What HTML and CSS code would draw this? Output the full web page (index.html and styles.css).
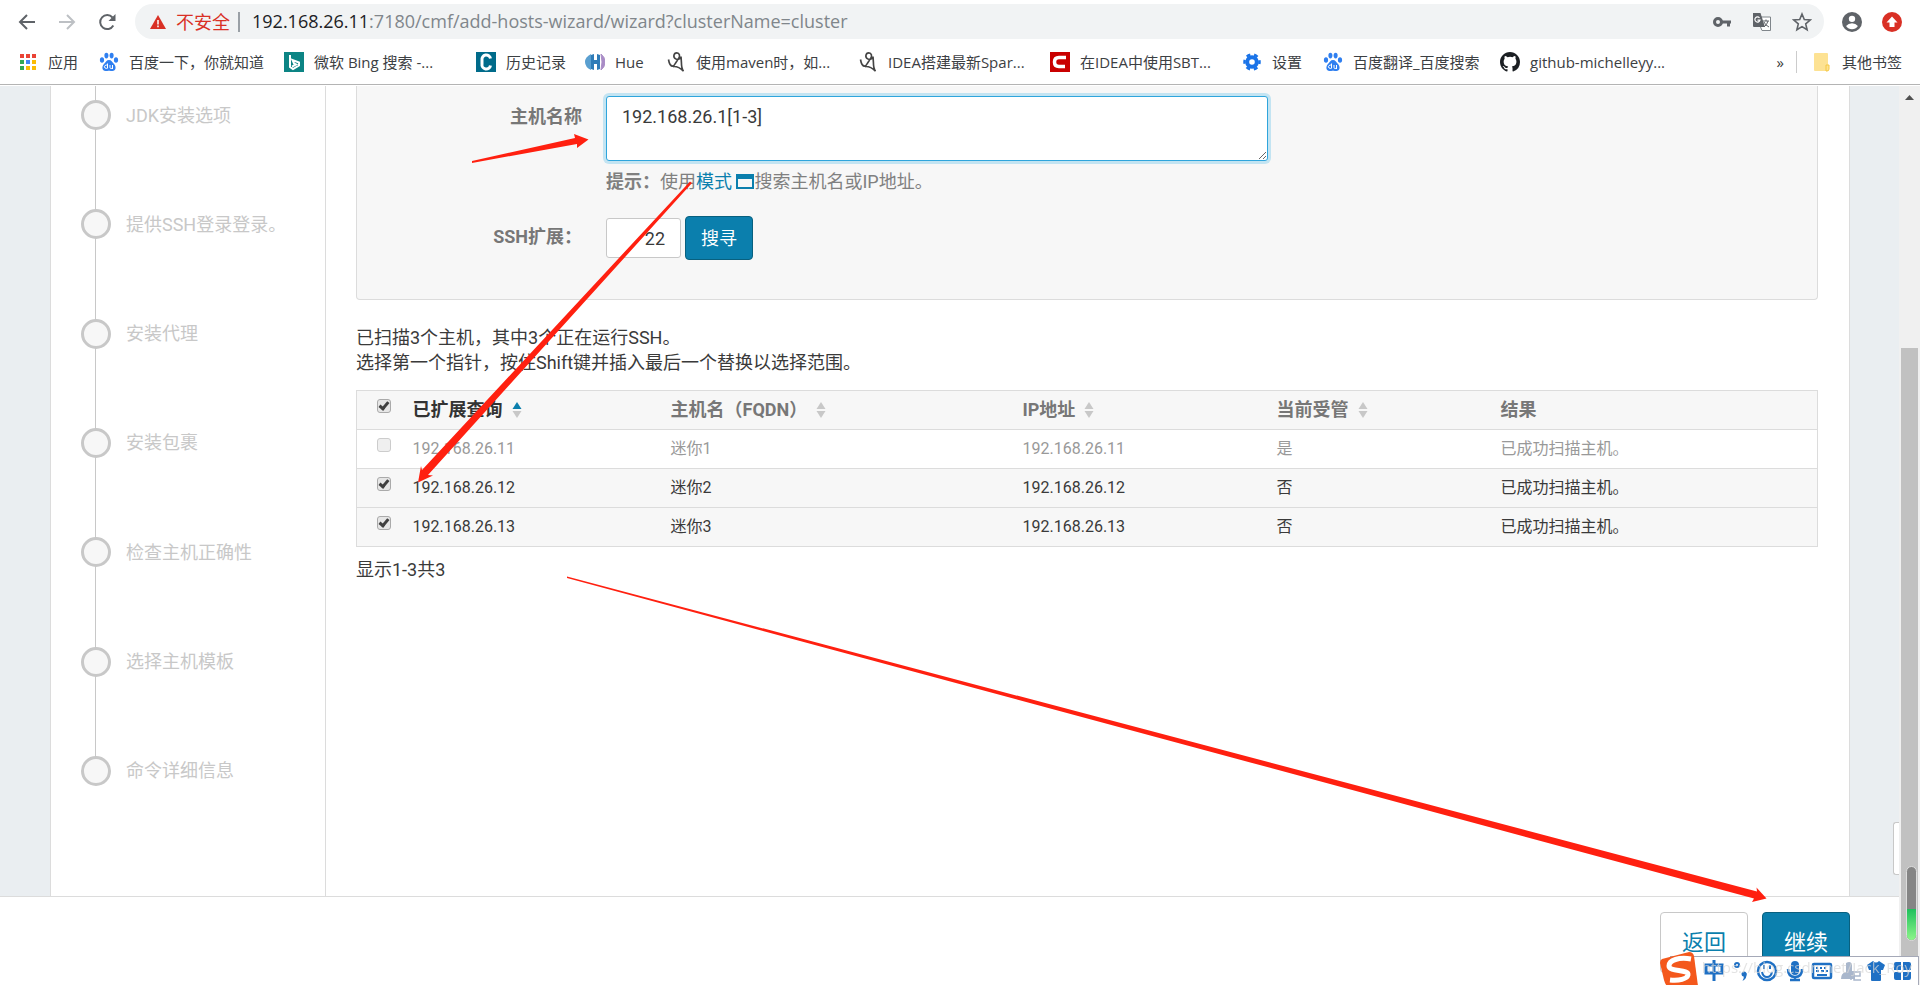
FILE: index.html
```html
<!DOCTYPE html>
<html lang="zh-CN">
<head>
<meta charset="utf-8">
<title>添加主机</title>
<link rel="stylesheet" href="styles.css">
</head>
<body>
<svg class="defs" aria-hidden="true">
  <symbol id="paw" viewBox="0 0 20 20">
    <g fill="#2f7ff0"><ellipse cx="3" cy="8" rx="2.1" ry="2.8"/><ellipse cx="7.4" cy="3.6" rx="2" ry="2.8"/><ellipse cx="12.6" cy="3.6" rx="2" ry="2.8"/><ellipse cx="17" cy="8" rx="2.1" ry="2.8"/><path d="M10 8c2.500 0 3 2 5 4 2.600 2.600 2 7-1.600 7-1.600 0-2-.3-3.400-.3s-1.800.3-3.400.3C3 19 2.400 14.600 5 12c2-2 2.500-4 5-4z"/></g>
    <path d="M8.500 11.500v5M8.500 14a1.600 1.600 0 1 0 0 1.500M11 13v2.500q0 1 1.200 1t1.300-1V13v4" fill="none" stroke="#fff"/>
  </symbol>
  <symbol id="quill" viewBox="0 0 20 24">
    <path d="M1 9c1 6 3 8 5 8 2.500 0 3-4 7-9 2.500-3 1-7-2-7-4 0-5 6-1 7.500 3 1 6-1 6-3l.5 7c0 5 .5 8 2.500 10.500-3-3-7-6-12.500-5.500" fill="none" stroke="#444" stroke-width="2"/>
  </symbol>
  <symbol id="sort" viewBox="0 0 10 16"><path class="sort-up" d="M5 0l4.500 7h-9z"/><path class="sort-down" d="M.5 9h9L5 16z"/></symbol>
</svg>

<header class="browser">
  <div class="toolbar">
    <nav class="nav" aria-label="浏览">
      <button class="icon-btn" aria-label="后退"><svg width="20" height="20" viewBox="0 0 20 20"><path d="M18 10H3M10 3l-7 7 7 7" fill="none" stroke="#5f6368" stroke-width="2"/></svg></button>
      <button class="icon-btn" aria-label="前进"><svg width="20" height="20" viewBox="0 0 20 20"><path d="M2 10h15M10 3l7 7-7 7" fill="none" stroke="#bdc0c4" stroke-width="2"/></svg></button>
      <button class="icon-btn" aria-label="刷新"><svg width="20" height="20" viewBox="0 0 20 20"><path d="M16.300 13.500A7 7 0 1 1 15.500 5.500" fill="none" stroke="#5f6368" stroke-width="2"/><path d="M18.500 2v7h-7z" fill="#5f6368"/></svg></button>
    </nav>
    <div class="address">
      <svg width="16" height="16" viewBox="0 0 16 16"><path d="M8 1l8 14H0z" fill="#d93025"/><path d="M8 6v4.500M8 11.500v1.800" stroke="#fff" stroke-width="1.500"/></svg>
      <span class="insecure">不安全</span>
      <span class="url">192.168.26.11<span class="url-rest">:7180/cmf/add-hosts-wizard/wizard?clusterName=cluster</span></span>
      <button class="icon-btn" aria-label="密码"><svg width="20" height="20" viewBox="0 0 20 20"><path d="M9 8.500h10v3h-1v3h-3v-3H9" fill="#5f6368"/><circle cx="6" cy="10" r="3.500" fill="#f1f3f4" stroke="#5f6368" stroke-width="3"/></svg></button>
      <button class="icon-btn" aria-label="翻译"><svg width="20" height="20" viewBox="0 0 20 20"><path d="M8 5h10.500v13.500H10L8.500 15" fill="#fff" stroke="#80868b"/><path d="M1 1h7.500L13 15H2q-1 0-1-1z" fill="#5f6368"/><path d="M7.500 5.800A2.600 2.600 0 1 0 8 8.200H5.500" fill="none" stroke="#fff" stroke-width="1.200"/><path d="M11 9h6M14 7.500V9M16 9q-1 4-4 6M12 10q1 3 5 5" fill="none" stroke="#5f6368"/></svg></button>
      <button class="icon-btn" aria-label="收藏"><svg width="20" height="20" viewBox="0 0 20 20"><path d="M10 2l2.300 5.500 5.900.5-4.500 3.900 1.400 5.800L10 14.600l-5.100 3.100 1.400-5.800L1.800 8l5.900-.5z" fill="none" stroke="#5f6368" stroke-width="1.600"/></svg></button>
    </div>
    <button class="icon-btn" aria-label="用户"><svg width="20" height="20" viewBox="0 0 22 22"><circle cx="11" cy="11" r="11" fill="#5f6368"/><circle cx="11" cy="7.500" r="3.500" fill="#fff"/><path d="M4.500 15.500q2.500-3 6.500-3t6.500 3q-2.500 3.500-6.500 3.500t-6.500-3.500z" fill="#fff"/></svg></button>
    <button class="icon-btn" aria-label="更新"><svg width="20" height="20" viewBox="0 0 20 20"><circle cx="10" cy="10" r="10" fill="#d93025"/><path d="M10 4.500l5.500 6h-3V15h-5v-4.500h-3z" fill="#fff"/></svg></button>
  </div>
  <nav class="bookmarks" aria-label="书签">
    <a class="bm bm-short" href="#"><svg width="20" height="20" viewBox="0 0 20 20"><path d="M2 2h4v4H2z" fill="#ea4335"/><path d="M8 2h4v4H8z" fill="#ea4335"/><path d="M14 2h4v4h-4z" fill="#ea4335"/><path d="M2 8h4v4H2zM2 14h4v4H2z" fill="#34a853"/><path d="M8 8h4v4H8z" fill="#4285f4"/><path d="M14 8h4v4h-4zM8 14h4v4H8zM14 14h4v4h-4z" fill="#fbbc04"/></svg><span>应用</span></a>
    <a class="bm bm-long" href="#"><svg width="20" height="20"><use href="#paw"/></svg><span>百度一下，你就知道</span></a>
    <a class="bm bm-full" href="#"><svg width="20" height="20" viewBox="0 0 20 20"><path d="M0 0h20v20H0z" fill="#0c8484"/><path d="M6 3v12l3 2 6-3.500v-3L8.500 8l1.500 3.500 2 1-4 2.200" fill="none" stroke="#fff" stroke-width="2"/></svg><span>微软 Bing 搜索 -...</span></a>
    <a class="bm bm-medium" href="#"><svg width="20" height="20" viewBox="0 0 20 20"><path d="M0 0h20v20H0z" fill="#006b8a"/><path d="M14.500 6.500A4 4 0 0 0 6 8v4a4 4 0 0 0 8.500 1.500" fill="none" stroke="#fff" stroke-width="3"/></svg><span>历史记录</span></a>
    <a class="bm bm-short" href="#"><svg width="20" height="20" viewBox="0 0 20 20"><path d="M6 2q-6 3-6 8t6 8z" fill="#5a9fd0"/><path d="M6 3l3-1v6h3V2l3 1v14l-3 1v-6H9v6l-3-1z" fill="#2f7cb8"/><path d="M16 2q4 3 4 8t-4 8q2-8 0-16z" fill="#a98cc6" stroke="#a98cc6"/></svg><span>Hue</span></a>
    <a class="bm bm-full" href="#"><svg width="20" height="20"><use href="#quill"/></svg><span>使用maven时，如...</span></a>
    <a class="bm bm-full" href="#"><svg width="20" height="20"><use href="#quill"/></svg><span>IDEA搭建最新Spar...</span></a>
    <a class="bm bm-full" href="#"><svg width="20" height="20" viewBox="0 0 20 20"><path d="M0 0h20v20H0z" fill="#c90000"/><path d="M16 5.500H9Q4.500 5.500 4.500 10T9 14.500h6" fill="none" stroke="#fff" stroke-width="3.500"/></svg><span>在IDEA中使用SBT...</span></a>
    <a class="bm bm-short" href="#"><svg width="20" height="20" viewBox="0 0 20 20"><circle cx="10" cy="10" r="4.800" fill="none" stroke="#1a73e8" stroke-width="4"/><circle cx="10" cy="10" r="7.500" fill="none" stroke="#1a73e8" stroke-width="2.500" stroke-dasharray="4 3.850" stroke-dashoffset="2"/></svg><span>设置</span></a>
    <a class="bm bm-search" href="#"><svg width="20" height="20"><use href="#paw"/></svg><span>百度翻译_百度搜索</span></a>
    <a class="bm bm-full" href="#"><svg width="20" height="20" viewBox="0 0 16 16"><path fill="#1b1f23" d="M8 0C3.580 0 0 3.580 0 8c0 3.540 2.290 6.530 5.470 7.590.4.070.55-.17.55-.38v-1.490c-2.010.37-2.530-.49-2.690-.94-.09-.23-.48-.94-.82-1.130-.28-.15-.68-.52-.01-.53.63-.01 1.080.58 1.230.82.72 1.210 1.870.87 2.330.66.07-.52.28-.87.51-1.070-1.780-.2-3.640-.89-3.640-3.950 0-.87.31-1.590.82-2.150-.08-.2-.36-1.020.08-2.120 0 0 .67-.21 2.200.82a7.600 7.600 0 0 1 4 0c1.530-1.040 2.200-.82 2.200-.82.44 1.100.16 1.920.08 2.120.51.56.82 1.270.82 2.150 0 3.070-1.870 3.750-3.650 3.950.29.25.54.73.54 1.480v2.200c0 .21.150.46.55.38A8 8 0 0 0 16 8c0-4.420-3.580-8-8-8z"/></svg><span>github-michelleyy...</span></a>
    <button class="more" aria-label="更多书签">»</button>
    <a class="other" href="#"><svg width="20" height="20" viewBox="0 0 20 20"><path d="M3 1h12q1 0 1 1v17H3q-1 0-1-1V2q0-1 1-1z" fill="#fde293"/><path d="M14 13h3v4q0 2-2 2h-1z" fill="#fde293" stroke="#f5c842"/></svg><span>其他书签</span></a>
  </nav>
</header>

<div class="viewport">
  <div class="page">
    <div class="wizard">
      <aside class="sidebar">
        <ol class="steps">
          <li class="step">JDK安装选项</li>
          <li class="step">提供SSH登录登录。</li>
          <li class="step">安装代理</li>
          <li class="step">安装包裹</li>
          <li class="step">检查主机正确性</li>
          <li class="step">选择主机模板</li>
          <li class="step">命令详细信息</li>
        </ol>
      </aside>
      <main class="content">
        <form class="search">
          <label class="field-label" for="hosts">主机名称</label>
          <div class="field">
            <textarea class="hosts" id="hosts" autofocus>192.168.26.1[1-3]</textarea>
            <p class="hint"><strong>提示：</strong>使用<a href="#">模式 <svg width="18" height="15" viewBox="0 0 18 15"><path d="M1 1h16v13H1zM1 3h16" fill="none" stroke="#0b7fad" stroke-width="2"/><path d="M0 0h18v5H0z" fill="#0b7fad"/></svg></a>搜索主机名或IP地址。</p>
          </div>
          <label class="field-label" for="port">SSH扩展：</label>
          <div class="port-row">
            <input class="port" id="port" type="text" value="22">
            <button class="btn btn-primary" type="button">搜寻</button>
          </div>
        </form>
        <p class="summary">已扫描3个主机，其中3个正在运行SSH。<br>选择第一个指针，按住Shift键并插入最后一个替换以选择范围。</p>
        <table class="results">
          <colgroup><col class="c-check"><col class="c-query"><col class="c-name"><col class="c-ip"><col class="c-managed"><col></colgroup>
          <thead>
            <tr>
              <th><input type="checkbox" aria-label="全选" checked></th>
              <th class="sorted">已扩展查询<svg class="sort"><use href="#sort"/></svg></th>
              <th>主机名（FQDN）<svg class="sort"><use href="#sort"/></svg></th>
              <th>IP地址<svg class="sort"><use href="#sort"/></svg></th>
              <th>当前受管<svg class="sort"><use href="#sort"/></svg></th>
              <th>结果</th>
            </tr>
          </thead>
          <tbody>
            <tr class="managed"><td><input type="checkbox" aria-label="192.168.26.11" disabled></td><td>192.168.26.11</td><td>迷你1</td><td>192.168.26.11</td><td>是</td><td>已成功扫描主机。</td></tr>
            <tr><td><input type="checkbox" aria-label="192.168.26.12" checked></td><td>192.168.26.12</td><td>迷你2</td><td>192.168.26.12</td><td>否</td><td>已成功扫描主机。</td></tr>
            <tr><td><input type="checkbox" aria-label="192.168.26.13" checked></td><td>192.168.26.13</td><td>迷你3</td><td>192.168.26.13</td><td>否</td><td>已成功扫描主机。</td></tr>
          </tbody>
        </table>
        <p class="count">显示1-3共3</p>
      </main>
    </div>
    <footer class="actions">
      <button class="btn btn-large">返回</button>
      <button class="btn btn-large btn-primary">继续</button>
    </footer>
    <div class="side-tab"></div>
  </div>
  <div class="scrollbar">
    <svg width="21" height="17" viewBox="0 0 21 17"><path d="M6 14l4.500-5 4.500 5z" fill="#505050"/></svg>
    <div class="thumb"></div>
  </div>
</div>

<svg class="arrows" viewBox="0 0 1920 985" aria-hidden="true">
  <g fill="#ff2010">
    <path d="M472 161L575 138l-1-4 14.500 5.500L577 148v-4L472 163z"/>
    <path d="M690 181.500L422 470l-1-4-3 16.500 15-7-5-.5L692 183z"/>
    <path d="M567 576.500L1757 891.500l-.5-4 10 11-14.500 3.500 2-3.500L567 578z"/>
  </g>
</svg>

<div class="meter"><div class="meter-fill"></div></div>

<div class="ime">
  <svg width="260" height="36" viewBox="-4 -2 260 36">
    <path d="M0 8l27-7q4 0 5 4l4 30H5q-2-2-3-6L-2 12q0-3 2-4z" fill="#f4581c"/>
    <path d="M29 8C17 6 7 9 7 15c0 6 20 3 19 9-1 4-9 6-18 5" fill="none" stroke="#fff" stroke-width="5"/>
    <g fill="none" stroke="#1f70c4" stroke-width="3">
      <path d="M44 14h16v8H44zM52 9v21"/>
      <circle cx="75" cy="14" r="2" stroke-width="2"/>
      <circle cx="105" cy="20" r="9" stroke-width="2.500"/><path d="M100 21q1 5 5 5t5-5" stroke-width="2"/><path d="M102 14v4M108 14v4" stroke-width="2"/>
      <path d="M126 18q0 8 7 8t7-8M133 26v4M128 29h10" stroke-width="2.500"/>
      <rect x="151" y="13" width="18" height="14" rx="1" stroke-width="2.500"/><path d="M154 17h2M158 17h2M162 17h2M154 20h3M159 20h3M164 20h2M155 24h10" stroke-width="2"/>
    </g>
    <g fill="#1f70c4"><circle cx="82" cy="23" r="2.500"/><path d="M84.500 22q1 5-4 8 2-3 1-6z"/><rect x="129" y="10" width="8" height="14" rx="4"/>
    <path d="M205 14l6-4q3 3 6 0l6 4-2 5h-2v10q0 1-1 1h-8q-1 0-1-1V19h-2z"/>
    <path d="M234 11h5v8h-7v-6q0-2 2-2zM241 11h6q2 0 2 2v6h-8zM232 21h7v8h-5q-2 0-2-2zM241 21h8v6q0 2-2 2h-6z"/></g>
    <path d="M179 28q0-6 5-7v-9q5-3 6 2v6h3v8z" fill="#a9b7cc"/><path d="M186 21h3v8M191 21h7v4h-6v4h7" fill="none" stroke="#a9b7cc" stroke-width="1.500"/>
  </svg>
</div>
<div class="watermark">https://blog.csdn.net/Jack_Roy</div>
</body>
</html>
```
FILE: styles.css
```css
*, *::before { box-sizing: border-box; }

body {
  position: relative;
  margin: 0;
  height: 100vh;
  display: flex;
  flex-direction: column;
  overflow: hidden;
  background: #fff;
  color: #3a3a3a;
  font: 18px/25px Roboto, "Noto Sans CJK SC", sans-serif;
}

button, input, textarea { font: inherit; color: inherit; }
p { margin: 0; }
a { color: #0b7fad; text-decoration: none; }
.defs { position: absolute; width: 0; height: 0; }

/* Browser frame */
.browser {
  flex: none;
  border-bottom: 1px solid #b4b4b4;
  font-family: "Open Sans", "Noto Sans CJK SC", sans-serif;
}
.toolbar { display: flex; align-items: center; gap: 20px; padding: 4px 18px 4px 17px; height: 43px; }
.nav { display: flex; gap: 20px; }
.icon-btn { display: flex; padding: 0; border: 0; background: none; }
.address {
  flex: 1;
  display: flex;
  align-items: center;
  gap: 20px;
  height: 35px;
  margin: 0 -2px;
  padding: 0 12px 0 15px;
  border-radius: 18px;
  background: #f1f3f4;
}
.insecure {
  margin-left: -10px;
  padding-right: 8px;
  border-right: 2px solid #9aa0a6;
  line-height: 20px;
  color: #d93025;
}
.url { flex: 1; margin-left: -8px; color: #202124; white-space: nowrap; }
.url-rest { color: #80868b; }

.bookmarks {
  display: flex;
  align-items: center;
  height: 41px;
  padding: 0 18px 3px 18px;
  font-size: 15px;
  white-space: nowrap;
}
.bm, .other { display: flex; align-items: center; gap: 10px; color: #3c4043; }
.bm { flex: none; }
.bm svg, .other svg { flex: none; }
.bm-short { width: 81px; }
.bm-medium { width: 109px; }
.bm-search { width: 177px; }
.bm-long { width: 185px; }
.bm-full { width: 192px; }
.more { margin-left: auto; padding: 0 12px; border: 0; border-right: 1px solid #ccc; background: none; line-height: 22px; }
.other { padding-left: 15px; }

/* Page area */
.viewport { flex: 1; display: flex; min-height: 0; padding-top: 1px; }
.page { position: relative; flex: 1; display: flex; flex-direction: column; background: #eaeef1; }
.wizard { flex: 1; display: flex; margin: 0 49px 0 50px; border: solid #dcdcdc; border-width: 0 1px; background: #fff; }

.sidebar { display: flex; flex: none; width: 275px; padding-left: 30px; border-right: 1px solid #dcdcdc; }
.steps {
  flex: 1;
  display: flex;
  flex-direction: column;
  justify-content: space-between;
  margin: 0;
  padding: 14px 0 110px;
  list-style: none;
  color: #c8c8c8;
  background: linear-gradient(#c8c8c8, #c8c8c8) 14px 0 / 1px calc(100% - 125px) no-repeat;
}
.step { display: flex; align-items: center; gap: 15px; }
.step::before { content: ""; width: 30px; height: 30px; border: 3px solid #c8c8c8; border-radius: 50%; background: #f7f7f7; }

.content { flex: 1; padding: 0 31px 0 30px; }
.search {
  display: grid;
  grid-template-columns: 225px minmax(0, 662px);
  gap: 22px 24px;
  padding: 10px 0 39px;
  border: 1px solid #dcdcdc;
  border-top: 0;
  border-radius: 0 0 4px 4px;
  background: #f7f7f7;
}
.field-label { padding-top: 8px; text-align: right; font-weight: bold; color: #777; }
.hosts {
  display: block;
  width: 100%;
  height: 65px;
  padding: 7px 15px;
  border: 1px solid #2fa5dc;
  border-radius: 3px;
  outline: 0;
  background: #fff;
  box-shadow: 0 0 0 3px #c3e4f2;
}
.hint { margin-top: 8px; color: #808080; }
.hint svg { vertical-align: -1px; }
.port-row { display: flex; align-items: center; gap: 4px; }
.port { width: 75px; height: 40px; padding: 0 15px; border: 1px solid #c8c8c8; border-radius: 3px; background: #fff; text-align: right; }

.btn { height: 44px; padding: 0 15px; border: 1px solid #c8c8c8; border-radius: 4px; background: #fff; color: #0b7fad; }
.btn-primary { border-color: #08607f; background: #0b7fad; color: #fff; }
.btn-large { width: 88px; height: 61px; font-size: 22px; }

.summary { margin: 25px 0 15px; }

.results { width: 100%; table-layout: fixed; border-collapse: collapse; border: 1px solid #dcdcdc; font-size: 16px; }
.results th, .results td { height: 39px; padding: 0 0 2px; border-bottom: 1px solid #dcdcdc; text-align: left; }
.results tr { background: #f7f7f7; }
.results .managed { background: #fff; color: #999; }
.results th { font-size: 18px; color: #777; }
.results .sorted { color: #333; }
.c-check { width: 56px; }
.c-query { width: 258px; }
.c-name { width: 352px; }
.c-ip { width: 254px; }
.c-managed { width: 224px; }
.sort { width: 10px; height: 16px; margin-left: 9px; vertical-align: -2px; fill: #c8c8c8; }
.sorted .sort { --up: #0b7fad; }
.sort-up { fill: var(--up, #c8c8c8); }

.results input {
  appearance: none;
  display: block;
  width: 14px;
  height: 14px;
  margin: 0 0 6px 20px;
  border: 1px solid #aaa;
  border-radius: 3px;
  background: #e6e6e6;
}
.results input:checked::before {
  content: "";
  display: block;
  width: 6px;
  height: 10px;
  margin-left: 3px;
  border: solid #404040;
  border-width: 0 3px 3px 0;
  transform: rotate(40deg);
}
.results input:disabled { border-color: #ccc; background: #efefef; }

.count { margin-top: 10px; }

.actions {
  flex: none;
  display: flex;
  justify-content: flex-end;
  gap: 14px;
  height: 89px;
  padding: 15px 49px 0 0;
  border-top: 1px solid #dcdcdc;
  background: #fff;
}

.side-tab {
  position: absolute;
  right: 0;
  bottom: 110px;
  width: 6px;
  height: 53px;
  border: 1px solid #c8c8c8;
  border-right: 0;
  border-radius: 3px 0 0 3px;
  background: #fff;
}

.scrollbar { flex: none; display: flex; flex-direction: column; width: 21px; background: #f0f0f0; }
.thumb { flex: 1; margin: 245px 2px 0; background: #c1c1c1; }

/* Overlays */
.arrows { position: absolute; inset: 0; width: 100%; height: 100%; pointer-events: none; }
.meter {
  position: absolute;
  right: 3px;
  bottom: 44px;
  display: flex;
  align-items: flex-end;
  width: 11px;
  height: 75px;
  border: 1px solid #ddd;
  border-radius: 6px;
  background: #858585;
  overflow: hidden;
}
.meter-fill { width: 100%; height: 31px; background: linear-gradient(#1fc05c, #8df58a); }
.ime {
  position: absolute;
  right: 1px;
  bottom: 0;
  width: 249px;
  height: 29px;
  display: flex;
  align-items: flex-end;
  justify-content: flex-end;
  border: solid #a5a9b8;
  border-width: 1px 1px 0 0;
  background: #fff;
}
.ime svg { flex: none; }
.watermark {
  position: absolute;
  right: 8px;
  bottom: 6px;
  font: 15px/24px "Open Sans", sans-serif;
  color: rgba(215, 215, 215, 0.7);
}
```
